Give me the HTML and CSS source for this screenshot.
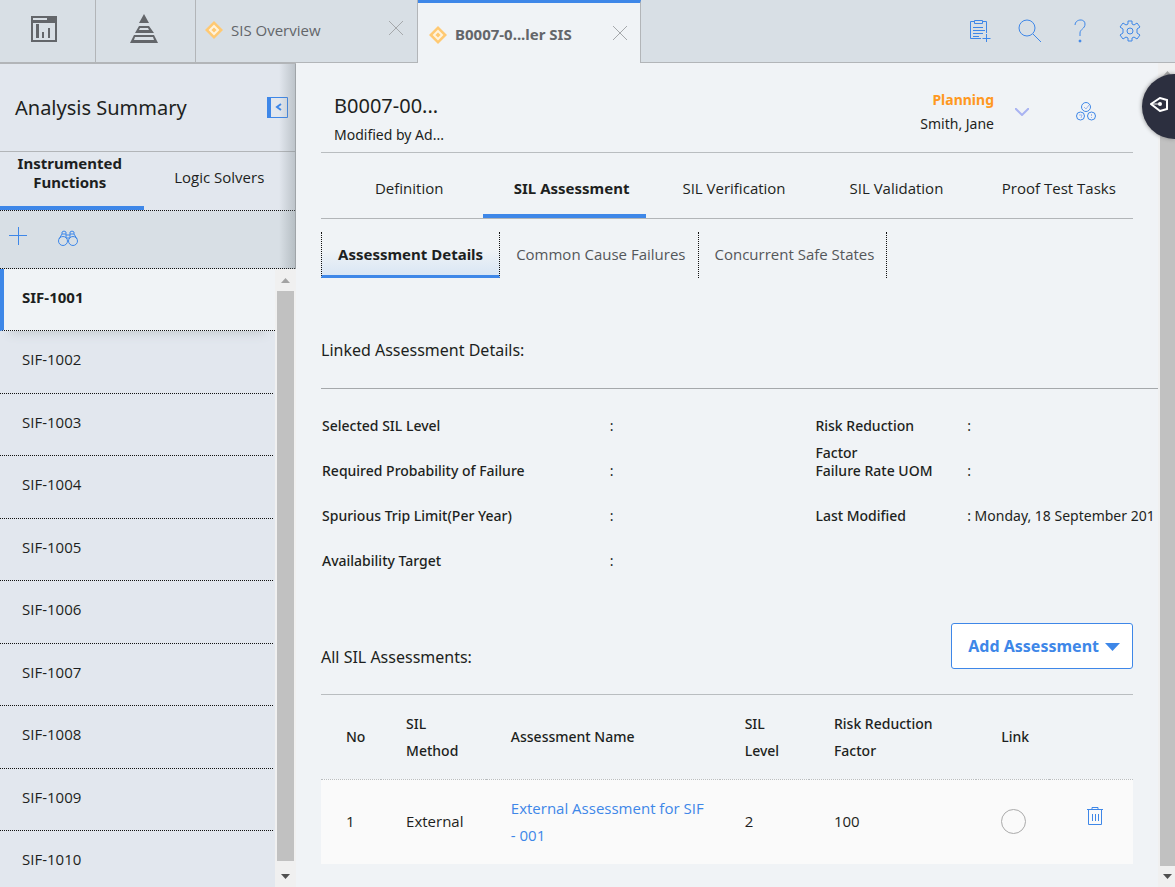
FILE: index.html
```html
<!DOCTYPE html>
<html lang="en">
<head>
  <meta charset="utf-8">
  <title>SIL Assessment</title>
  <link rel="stylesheet" href="styles.css">
</head>
<body>
  <header class="topbar">
    <button class="top-button" aria-label="Dashboard">
      <svg width="28" height="28" viewBox="0 0 28 28"><path fill="#63666a" fill-rule="evenodd" d="M1 1h26v26H1zM3 3v2h14V3zM3 8v17h22V8z"/><path fill="#63666a" d="M6 9h3v14H6zM12 17h2v6h-2zM18 13h2v10h-2z"/></svg>
    </button>
    <button class="top-button" aria-label="Hierarchy">
      <svg width="28" height="29" viewBox="0 0 28 29"><path fill="#63666a" fill-rule="evenodd" d="M14 0l5 9H9zM9 12h10l5 7H5zM10 14l-1 2h10l-1-2zM4 21h20l4 8H0zM5 23l-1 3h20l-1-3z"/></svg>
    </button>
    <div class="page-tab">
      <svg width="18" height="18" viewBox="0 0 18 18"><path fill="#ffc972" d="M9 0l9 9-9 9-9-9z"/><path fill="none" stroke="#fff3dc" stroke-width="2" d="M9 5l4 4-4 4-4-4z"/></svg>
      <a href="#overview">SIS Overview</a>
      <button class="close" aria-label="Close SIS Overview"><svg width="14" height="14" viewBox="0 0 14 14"><path d="M0 0l14 14M14 0L0 14"/></svg></button>
    </div>
    <div class="page-tab active">
      <svg width="18" height="18" viewBox="0 0 18 18"><path fill="#ffc972" d="M9 0l9 9-9 9-9-9z"/><path fill="none" stroke="#fff3dc" stroke-width="2" d="M9 5l4 4-4 4-4-4z"/></svg>
      <a href="#sis">B0007-0...ler SIS</a>
      <button class="close" aria-label="Close SIS"><svg width="14" height="14" viewBox="0 0 14 14"><path d="M0 0l14 14M14 0L0 14"/></svg></button>
    </div>
    <div class="tools">
      <button aria-label="New record"><svg class="line-icon" width="22" height="24" viewBox="0 0 22 24"><path d="M5 2.500H1.500v17H12M14 2.500h3.500V14M5.500 1.500h8v3h-8zM4 8.500h10M4 11.500h12M4 14.500h10M4 17.500h6M17.500 15v8M13.500 19.500h8"/></svg></button>
      <button aria-label="Search"><svg class="line-icon" width="24" height="24" viewBox="0 0 24 24"><circle cx="9" cy="9" r="8"/><path d="M15 15l8 8"/></svg></button>
      <button aria-label="Help"><svg class="line-icon" width="14" height="24" viewBox="0 0 14 24"><path d="M2 6c0-6 10-7 10-1 0 5-5 5-5 9v3"/><circle class="dot" cx="7" cy="22" r="1"/></svg></button>
      <button aria-label="Settings"><svg class="line-icon" width="22" height="22" viewBox="0 0 22 22"><circle cx="11" cy="11" r="3"/><path d="M9 1h4v3l2 1 3-2 3 4-3 2v4l3 2-3 4-3-2-2 1v3H9v-3l-2-1-3 2-3-4 3-2V9L1 7l3-4 3 2 2-1z"/></svg></button>
    </div>
  </header>

  <div class="layout">
    <aside class="sidebar">
      <div class="sidebar-top">
        <div class="summary">
          <h1>Analysis Summary</h1>
          <button aria-label="Collapse"><svg width="21" height="21" viewBox="0 0 21 21"><path fill="#3e87e8" d="M0 0h4v21H0z"/><path fill="none" stroke="#3e87e8" d="M.5.5h20v20H.5z"/><path fill="none" stroke="#3e87e8" stroke-width="2" d="M14 7l-4 3 4 3"/></svg></button>
        </div>
        <nav class="side-tabs">
          <a class="active" href="#functions">Instrumented Functions</a>
          <a href="#solvers">Logic Solvers</a>
        </nav>
        <div class="side-tools">
          <button aria-label="Add"><svg class="line-icon" width="18" height="18" viewBox="0 0 18 18"><path d="M9.500 0v18M0 8.500h18"/></svg></button>
          <button class="find" aria-label="Find"><svg class="line-icon" width="20" height="16" viewBox="0 0 20 16"><circle cx="5" cy="11" r="4.500"/><circle cx="15" cy="11" r="4.500"/><path d="M1 9l3-5V2q2-2 4 0v6M19 9l-3-5V2q-2-2-4 0v6M4 4h4M12 4h4M8 5h4M8 8h4"/></svg></button>
        </div>
      </div>
      <div class="list-area">
        <nav class="sif-list">
          <a class="active" href="#1001">SIF-1001</a>
          <a href="#1002">SIF-1002</a>
          <a href="#1003">SIF-1003</a>
          <a href="#1004">SIF-1004</a>
          <a href="#1005">SIF-1005</a>
          <a href="#1006">SIF-1006</a>
          <a href="#1007">SIF-1007</a>
          <a href="#1008">SIF-1008</a>
          <a href="#1009">SIF-1009</a>
          <a href="#1010">SIF-1010</a>
        </nav>
        <div class="scrollbar list-scrollbar">
          <svg width="9" height="5" viewBox="0 0 9 5"><path fill="#a3a3a3" d="M0 5l4.500-5L9 5z"/></svg>
          <div class="thumb"></div>
          <svg width="9" height="5" viewBox="0 0 9 5"><path fill="#505050" d="M0 0h9L4.500 5z"/></svg>
        </div>
      </div>
    </aside>

    <main class="main">
      <div class="content">
        <div class="record-header">
          <div class="record-title">
            <h2>B0007-00...</h2>
            <p>Modified by Ad...</p>
          </div>
          <div class="status">
            <strong>Planning</strong>
            <span>Smith, Jane</span>
          </div>
          <button aria-label="Change state"><svg width="14" height="8" viewBox="0 0 14 8"><path fill="none" stroke="#a9b3f2" stroke-width="2" d="M0 0l7 7 7-7"/></svg></button>
          <button class="team" aria-label="Team"><svg class="line-icon" width="20" height="20" viewBox="0 0 20 20"><circle cx="10" cy="5" r="4.500"/><circle cx="4.500" cy="14" r="4"/><circle cx="15.500" cy="14" r="4"/><path class="faint" d="M8 5l2 2 3-4M3 13h3l-1 3M15.500 12v2M15.500 15v1"/></svg></button>
        </div>
        <nav class="tabs">
          <a href="#definition">Definition</a>
          <a class="active" href="#assessment">SIL Assessment</a>
          <a href="#verification">SIL Verification</a>
          <a href="#validation">SIL Validation</a>
          <a href="#tasks">Proof Test Tasks</a>
        </nav>
        <nav class="sub-tabs">
          <a class="active" href="#details">Assessment Details</a>
          <a href="#common">Common Cause Failures</a>
          <a href="#concurrent">Concurrent Safe States</a>
        </nav>

        <section class="linked">
          <h3>Linked Assessment Details:</h3>
          <dl class="details">
            <dt>Selected SIL Level</dt><dd>:</dd>
            <dt>Risk Reduction Factor</dt><dd>:</dd>
            <dt>Required Probability of Failure</dt><dd>:</dd>
            <dt>Failure Rate UOM</dt><dd>:</dd>
            <dt>Spurious Trip Limit(Per Year)</dt><dd>:</dd>
            <dt>Last Modified</dt><dd>: Monday, 18 September 201</dd>
            <dt>Availability Target</dt><dd>:</dd>
          </dl>
        </section>

        <section>
          <div class="all-header">
            <h3>All SIL Assessments:</h3>
            <button class="add-button">Add Assessment <svg width="15" height="8" viewBox="0 0 15 8"><path fill="#3e87e8" d="M0 0h15L7.500 8z"/></svg></button>
          </div>
          <table class="assessments">
            <thead>
              <tr>
                <th class="col-no">No</th>
                <th class="col-method">SIL Method</th>
                <th class="col-name">Assessment Name</th>
                <th class="col-level">SIL Level</th>
                <th class="col-risk">Risk Reduction Factor</th>
                <th class="col-link">Link</th>
                <th></th>
              </tr>
            </thead>
            <tbody>
              <tr>
                <td>1</td>
                <td>External</td>
                <td><a href="#external">External Assessment for SIF -&nbsp;001</a></td>
                <td>2</td>
                <td>100</td>
                <td><input type="radio" name="link" aria-label="Link assessment 1"></td>
                <td class="col-delete"><button aria-label="Delete"><svg class="line-icon" width="16" height="18" viewBox="0 0 16 18"><path d="M0 2.500h16M5 2V.500h6V2M1.500 3v14.500h13V3M5.500 7v7M8.500 7v7M11.500 7v7"/></svg></button></td>
              </tr>
            </tbody>
          </table>
        </section>
      </div>
      <div class="scrollbar main-scrollbar">
        <svg width="9" height="5" viewBox="0 0 9 5"><path fill="#a3a3a3" d="M0 5l4.500-5L9 5z"/></svg>
        <div class="thumb"></div>
        <svg width="9" height="5" viewBox="0 0 9 5"><path fill="#505050" d="M0 0h9L4.500 5z"/></svg>
      </div>
      <button class="pen-tab" aria-label="Annotate"><svg width="18" height="15" viewBox="0 0 18 15"><path fill="none" stroke="#fff" stroke-width="2" d="M1 7l9-6 7 2v9l-7 2z"/><path stroke="#fff" d="M1 7h9"/><circle cx="10" cy="7" r="2" fill="#fff"/></svg></button>
    </main>
  </div>
</body>
</html>
```
FILE: styles.css
```css
* {
  box-sizing: border-box;
}

body {
  margin: 0;
  height: 100vh;
  display: flex;
  flex-direction: column;
  overflow: hidden;
  font-family: "Open Sans", "Noto Sans", sans-serif;
  font-size: 15px;
  line-height: 27px;
  color: #1d1f21;
  background: #f0f3f6;
}

h1, h2, h3, p, dl, dd {
  margin: 0;
  font-weight: normal;
}

h1, h2 {
  font-family: "Noto Sans", sans-serif;
  font-size: 20px;
}

h3 {
  font-family: "Noto Sans", sans-serif;
  font-size: 16px;
}

a {
  color: inherit;
  text-decoration: none;
}

a.active {
  font-family: "Noto Sans", sans-serif;
  font-weight: bold;
}

button {
  padding: 0;
  border: none;
  background: none;
  font: inherit;
  cursor: pointer;
}

svg {
  display: block;
  flex: none;
}

.line-icon {
  fill: none;
  stroke: #3e87e8;
  stroke-width: 1;
}

.line-icon .dot {
  fill: #3e87e8;
}

.line-icon .faint {
  stroke: #9db6ee;
}

/* top bar */
.topbar {
  display: flex;
  flex: none;
  height: 63px;
  background: #d8dfe5;
  border-bottom: 1px solid #b2b5b8;
}

.top-button {
  display: flex;
  align-items: center;
  justify-content: center;
  width: 100px;
  padding-right: 4px;
  padding-bottom: 5px;
  border-right: 1px solid #b2b5b8;
}

.top-button:first-child {
  width: 96px;
  padding-right: 8px;
}

.page-tab {
  display: flex;
  align-items: center;
  width: 222px;
  padding: 0 14px 2px 9px;
  gap: 8px;
  color: #63666a;
  border-right: 1px solid #b2b5b8;
}

.page-tab a {
  flex: 1;
}

.page-tab.active {
  width: 223px;
  margin-bottom: -1px;
  padding: 3px 13px 0 11px;
  font-family: "Noto Sans", sans-serif;
  font-weight: bold;
  background: #f0f3f6;
  border-top: 3px solid #3e87e8;
}

.close {
  padding-bottom: 4px;
}

.close svg {
  stroke: #a5a8ab;
  fill: none;
}

.tools {
  display: flex;
  align-items: center;
  margin-left: auto;
  padding-right: 20px;
}

.tools button {
  display: flex;
  justify-content: center;
  width: 50px;
}

.layout {
  display: flex;
  flex: 1;
  min-height: 0;
}

/* left panel */
.sidebar {
  display: flex;
  flex-direction: column;
  flex: none;
  width: 296px;
  background: #e2e7ee;
  border-top: 1px solid #b2b5b8;
}

.sidebar-top {
  position: relative;
  border-right: 1px solid #9fa4a8;
}

.sidebar-top::after {
  content: "";
  position: absolute;
  top: 0;
  right: 0;
  bottom: 0;
  width: 16px;
  background: linear-gradient(to right, rgba(120, 130, 135, 0), rgba(120, 130, 135, 0.35));
  pointer-events: none;
}

.summary {
  display: flex;
  align-items: center;
  justify-content: space-between;
  height: 88px;
  padding: 0 7px 0 15px;
  border-bottom: 1px solid #b2b5b8;
}

.side-tabs {
  display: flex;
  height: 59px;
  border-bottom: 1px dotted #111;
}

.side-tabs a {
  display: flex;
  align-items: center;
  justify-content: center;
  width: 152px;
  padding-bottom: 8px;
  text-align: center;
}

.side-tabs .active {
  width: 144px;
  padding: 0 16px 12px 12px;
  line-height: 19px;
  border-bottom: 4px solid #3e87e8;
}

.side-tools {
  display: flex;
  align-items: center;
  gap: 31px;
  height: 58px;
  padding: 0 9px 8px;
  background: #d8dfe5;
  border-bottom: 1px dotted #111;
}

.find {
  padding-top: 4px;
}

.list-area {
  display: flex;
  flex: 1;
  min-height: 0;
}

.sif-list {
  flex: 1;
  overflow: hidden;
}

.sif-list a {
  display: flex;
  align-items: center;
  height: 62px;
  padding-left: 22px;
  padding-bottom: 5px;
  margin-right: 2px;
  border-bottom: 1px dotted #111;
}

.sif-list a:nth-child(even) {
  height: 63px;
}

.sif-list .active {
  margin-right: 0;
  padding-left: 18px;
  background: #f0f3f6;
  border-left: 4px solid #3e87e8;
  box-shadow: 0 12px 10px -10px #c3c9ce;
}

.scrollbar {
  display: flex;
  flex-direction: column;
  align-items: center;
  flex: none;
  background: #f0f0f0;
}

.scrollbar .thumb {
  flex: 1;
  align-self: stretch;
  margin-bottom: 5px;
  background: #c1c1c1;
}

.list-scrollbar {
  width: 21px;
  padding: 9px 2px 8px;
  gap: 8px;
}

/* right panel */
.main {
  position: relative;
  display: flex;
  flex: 1;
  min-width: 0;
}

.content {
  flex: 1;
  min-width: 0;
  overflow: hidden;
  padding: 0 25px;
}

.main-scrollbar {
  width: 17px;
  padding: 8px 0 8px 2px;
  gap: 3px;
}

.pen-tab {
  position: absolute;
  top: 11px;
  right: 0;
  display: flex;
  align-items: center;
  width: 33px;
  height: 65px;
  padding: 0 8px 4px;
  border-radius: 33px 0 0 33px;
  background: #2c2f3f;
  box-shadow: 0 0 4px #888;
}

.record-header {
  display: flex;
  align-items: center;
  height: 90px;
  padding: 8px 37px 0 13px;
  border-bottom: 1px solid #b9bdc0;
}

.record-title {
  flex: 1;
  padding-top: 16px;
}

.record-title h2 {
  line-height: 30px;
}

.record-title p {
  font-family: "Noto Sans", sans-serif;
  font-size: 14px;
}

.status {
  display: flex;
  flex-direction: column;
  align-items: flex-end;
  margin-right: 21px;
  font-family: "Noto Sans", sans-serif;
  font-size: 14px;
  line-height: 24px;
}

.status strong {
  color: #ff9821;
}

.team {
  margin-left: 47px;
}

.tabs {
  display: flex;
  height: 66px;
  border-bottom: 1px solid #b2b5b8;
}

.tabs a {
  flex: 1;
  padding: 22px 0 0 14px;
  text-align: center;
}

.tabs .active {
  border-bottom: 4px solid #3e87e8;
}

.sub-tabs {
  display: flex;
  height: 46px;
  margin-top: 13px;
}

.sub-tabs a {
  padding: 9px 12px 9px 16px;
  color: #54575a;
  border-right: 1px dotted #111;
}

.sub-tabs .active {
  padding-right: 16px;
  color: #1d1f21;
  background: linear-gradient(#f0f3f6 40%, #d9e6f5);
  border-left: 1px dotted #111;
  border-bottom: 3px solid #3e87e8;
}

.linked {
  margin-right: -25px;
  padding-top: 59px;
}

.linked h3 {
  padding-bottom: 24px;
  border-bottom: 1px solid #a5a8ab;
}

.details {
  display: grid;
  grid-template-columns: 288fr 206fr 152fr 191fr;
  grid-auto-rows: 45px;
  padding: 23px 0 0 1px;
  font-family: "Noto Sans", sans-serif;
  font-size: 14px;
}

.details dt {
  min-width: 0;
  padding-right: 20px;
  font-weight: 500;
}

.details dd {
  min-width: 0;
  white-space: nowrap;
}

.all-header {
  display: flex;
  align-items: center;
  justify-content: space-between;
  height: 103px;
  padding: 5px 0 0;
  border-bottom: 1px solid #b9bdc0;
}

.all-header h3 {
  padding-top: 23px;
}

.add-button {
  display: flex;
  align-items: center;
  gap: 6px;
  height: 46px;
  padding: 2px 12px 0 16px;
  font-family: "Noto Sans", sans-serif;
  font-size: 16px;
  font-weight: bold;
  color: #3e87e8;
  background: #fff;
  border: 1px solid #3e87e8;
  border-radius: 3px;
}

.assessments {
  width: 100%;
  table-layout: fixed;
  border-collapse: collapse;
}

.assessments th, .assessments td {
  height: 84px;
  padding: 0 10px 0 25px;
  text-align: left;
}

.assessments th {
  font-family: "Noto Sans", sans-serif;
  font-size: 14px;
  font-weight: 500;
  border-bottom: 1px dotted #b9bdc0;
}

.assessments .col-level {
  padding-right: 20px;
}

.assessments .col-risk {
  padding-right: 30px;
}

.assessments td {
  height: 85px;
  background: #fafafa;
}

.assessments a {
  color: #3e87e8;
}

.col-no {
  width: 7.400%;
}

.col-method {
  width: 12.900%;
}

.col-name {
  width: 28.800%;
}

.col-level {
  width: 11%;
}

.col-risk {
  width: 20.600%;
}

.col-link {
  width: 8.900%;
}

.assessments .col-delete {
  padding: 0 0 4px 38px;
}

.assessments input {
  appearance: none;
  display: block;
  width: 25px;
  height: 25px;
  margin: 0;
  border: 1px solid #aaa;
  border-radius: 50%;
  background: #fafafa;
}
```
